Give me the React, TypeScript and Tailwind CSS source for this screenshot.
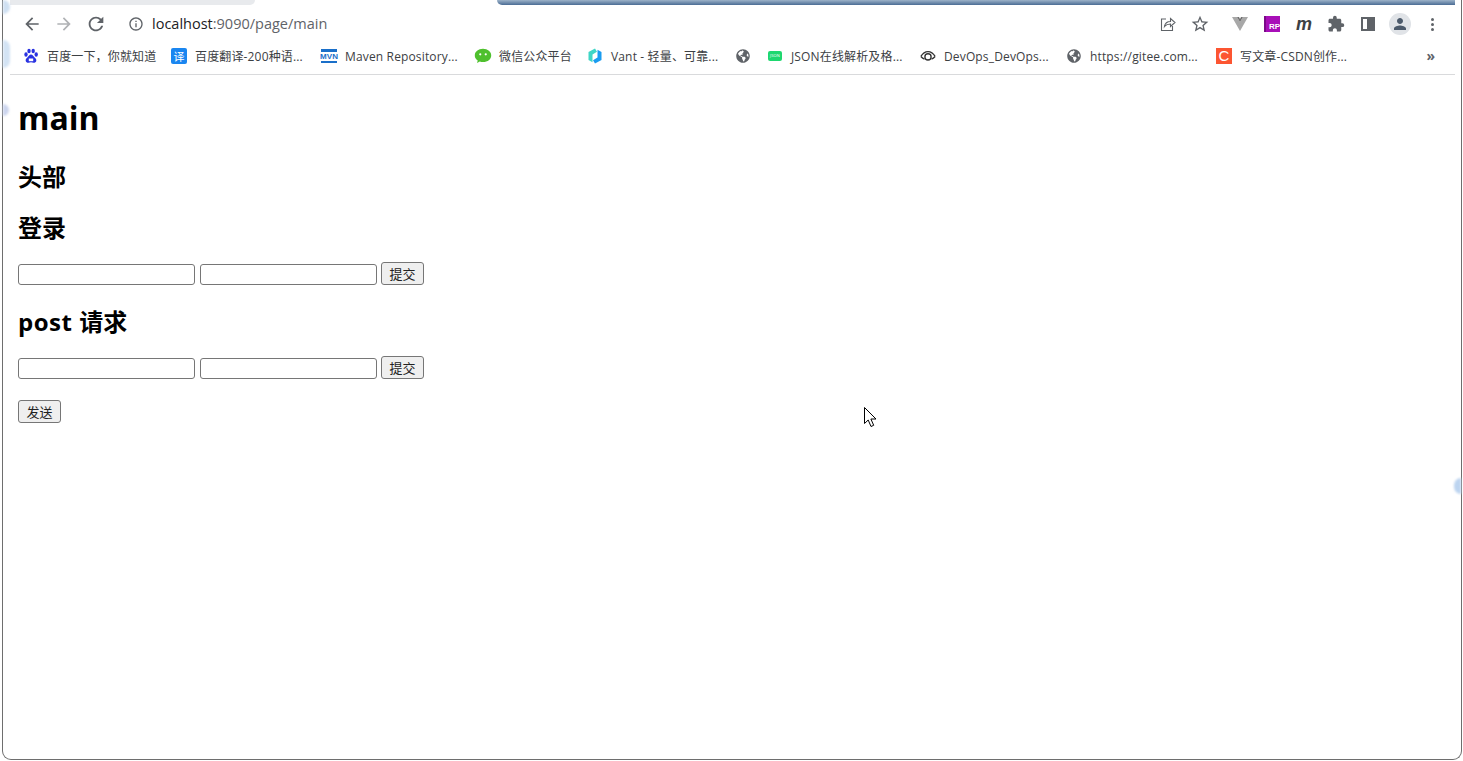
import { MdArrowBack, MdArrowForward, MdRefresh, MdInfoOutline, MdStarBorder, MdExtension, MdPerson } from "react-icons/md";
import { FaGlobeAmericas } from "react-icons/fa";

const UI = "font-['Open_Sans','Noto_Sans_CJK_SC',sans-serif]";

function Cell({ children }: { children: React.ReactNode }) {
  return <div className="w-8 h-8 flex items-center justify-center text-[#5f6368]">{children}</div>;
}

function BaiduIcon() {
  return (
    <svg width="16" height="16" viewBox="0 0 16 16" fill="#2932e1">
      <ellipse cx="3" cy="6.500" rx="1.700" ry="2.200" />
      <ellipse cx="6" cy="3" rx="1.700" ry="2.300" />
      <ellipse cx="10.200" cy="3" rx="1.700" ry="2.300" />
      <ellipse cx="13.200" cy="6.500" rx="1.700" ry="2.200" />
      <path d="M8 6.600c-1.600 0-2.300 1.500-3.400 2.600-1 1-2.300 1.900-1.900 3.700.3 1.300 1.500 1.900 2.800 1.800 1-.1 1.600-.4 2.500-.4s1.500.3 2.500.4c1.300.1 2.500-.5 2.800-1.800.4-1.800-.9-2.700-1.900-3.700C10.300 8.100 9.600 6.600 8 6.600z" />
      <path d="M5.800 10.500h4.400v2.700H5.800z" fill="#fff" />
    </svg>
  );
}

function MvnIcon() {
  return (
    <div className="w-4 h-4 flex flex-col justify-center items-center">
      <div className="w-4 h-[3px] bg-[#1a6fc9]" />
      <span className="text-[8px] leading-[9px] font-bold text-[#1a6fc9] font-['Liberation_Sans',sans-serif]">MVN</span>
      <div className="w-4 h-[2px] bg-[#1a6fc9]" />
    </div>
  );
}

function WechatIcon() {
  return (
    <svg width="16" height="16" viewBox="0 0 16 16" className="scale-110">
      <path d="M8 1.500c-4.300 0-7.500 2.700-7.500 6 0 1.900 1 3.500 2.700 4.600l-.6 2.200 2.500-1.300c.9.300 1.900.5 2.900.5 4.300 0 7.500-2.700 7.500-6s-3.200-6-7.500-6z" fill="#4fc02e" />
      <circle cx="5.500" cy="6.500" r="1" fill="#fff" />
      <circle cx="10.500" cy="6.500" r="1" fill="#fff" />
    </svg>
  );
}

function VantIcon() {
  return (
    <svg width="16" height="16" viewBox="0 0 16 16">
      <path d="M8 0.500 1.500 4v8l4 2.200V6.500l4.500-2.800z" fill="#3fd6c6" />
      <path d="M8 15.500l6.500-3.500V4l-4-2.200v7.700L6 12.300z" fill="#1a9cf0" />
    </svg>
  );
}

function DevopsIcon() {
  return (
    <svg width="16" height="16" viewBox="0 0 18 16" fill="none" stroke="#333" strokeWidth="1.500" className="shrink-0">
      <path d="M1 8.500C3 5 5.500 3 9 3s6 2 8 5.500" />
      <path d="M1 8.500c1.300 1.500 2.500 2.500 4 3M17 8.500c-1.300 1.500-2.500 2.500-4 3" />
      <circle cx="9" cy="9" r="3.500" />
    </svg>
  );
}

function Bookmark({ width, icon, label }: { width: string; icon: React.ReactNode; label?: string }) {
  return (
    <div className={`${width} shrink-0 flex items-center gap-2 text-[12px] tracking-[0.15px] text-[#3c4043]`}>
      <div className="w-4 h-4 flex items-center justify-center shrink-0">{icon}</div>
      {label && <span className="whitespace-nowrap mt-px">{label}</span>}
    </div>
  );
}

function Globe() {
  return <FaGlobeAmericas size={14} className="text-[#5f6368]" />;
}

function Pair() {
  return (
    <div className="flex items-end gap-1">
      <input className="w-[177px] h-[21px] bg-white border border-[#767676] rounded-[3px] mr-px" />
      <input className="w-[177px] h-[21px] bg-white border border-[#767676] rounded-[3px]" />
      <FormBtn label="提交" />
    </div>
  );
}

function FormBtn({ label }: { label: string }) {
  return (
    <button className="w-[43px] h-[23px] bg-[#efefef] border border-[#767676] rounded-[3px] text-[13px] leading-none text-[#222] font-['Noto_Sans_CJK_SC',sans-serif]">
      {label}
    </button>
  );
}

export default function App() {
  return (
    <div className={`relative w-[1463px] h-[761px] overflow-hidden bg-white ${UI}`}>
      <div className="ml-[2px] w-[1460px] h-[760px] border-x border-b border-[#6e6e6e] rounded-b-[9px] flex flex-col pl-[7px] pr-[6px]">
        {/* tab strip, mostly cut off by the capture */}
        <div className="flex h-[5px] shrink-0">
          <div className="w-[245px] bg-[#e8eaed] rounded-br-[6px]" />
          <div className="w-[242px]" />
          <div className="flex-1 rounded-bl-[5px] bg-linear-to-b from-[#9db3c9] to-[#4b6c94]" />
        </div>

        <div className="h-[38px] flex items-center shrink-0 pl-[6px] pr-[7px]">
          <Cell><MdArrowBack size={20} /></Cell>
          <Cell><span className="text-[#b0b2b5]"><MdArrowForward size={20} /></span></Cell>
          <Cell><MdRefresh size={22} /></Cell>
          <div className="w-2" />
          <Cell><MdInfoOutline size={16} /></Cell>
          <div className="text-[14.5px] whitespace-nowrap">
            <span className="text-[#202124]">localhost</span>
            <span className="text-[#5f6368]">:9090/page/main</span>
          </div>
          <div className="flex-1" />
          <Cell>
            <svg width="16" height="16" viewBox="0 0 16 16" fill="none" stroke="#5f6368" strokeWidth="1.100">
              <path d="M6 3H1.500v11.500h11V10" />
              <path d="M4.500 10.500c.5-3 2.500-5 6-5V2.500l4.500 4-4.500 4V8c-2.500 0-4.500.7-6 2.500z" />
            </svg>
          </Cell>
          <Cell><MdStarBorder size={20} /></Cell>
          <div className="w-2" />
          <Cell>
            <svg width="18" height="16" viewBox="0 0 18 16">
              <path d="M1 1h5l3 5 3-5h5L9 15z" fill="#a8a8a8" />
              <path d="M6 1l3 5 3-5h-2L9 3 8 1z" fill="#6f6f6f" />
            </svg>
          </Cell>
          <Cell>
            <div className="w-4 h-4 bg-[#a80fb8] border-l-2 border-[#7a0a88] flex items-end justify-end">
              <span className="text-[8px] leading-[10px] font-bold text-white font-['Liberation_Sans',sans-serif]">RP</span>
            </div>
          </Cell>
          <Cell><span className="text-[18px] leading-none font-bold italic text-[#3c4043] font-['Liberation_Sans',sans-serif]">m</span></Cell>
          <Cell><MdExtension size={18} /></Cell>
          <Cell>
            <div className="w-[14px] h-[14px] border-2 border-[#5f6368] flex justify-end">
              <div className="w-[6px] bg-[#5f6368]" />
            </div>
          </Cell>
          <Cell>
            <div className="w-[22px] h-[22px] rounded-full bg-[#e0e3e7] flex items-center justify-center">
              <MdPerson size={18} className="text-[#4c5a6b]" />
            </div>
          </Cell>
          <Cell>
            <div className="flex flex-col gap-[2px]">
              <div className="w-[3px] h-[3px] rounded-full bg-[#5f6368]" />
              <div className="w-[3px] h-[3px] rounded-full bg-[#5f6368]" />
              <div className="w-[3px] h-[3px] rounded-full bg-[#5f6368]" />
            </div>
          </Cell>
        </div>

        <div className="h-[32px] shrink-0 pb-[5px] border-b border-[#d9dadc] flex items-center pl-[13px] pr-[20px]">
          <Bookmark width="w-[148px]" icon={<BaiduIcon />} label="百度一下，你就知道" />
          <Bookmark width="w-[150px]" icon={<div className="w-4 h-4 rounded-[2px] bg-[#1a86f0] text-white text-[11px] leading-4 text-center font-['Noto_Sans_CJK_SC',sans-serif]">译</div>} label="百度翻译-200种语..." />
          <Bookmark width="w-[154px]" icon={<MvnIcon />} label="Maven Repository..." />
          <Bookmark width="w-[112px]" icon={<WechatIcon />} label="微信公众平台" />
          <Bookmark width="w-[148px]" icon={<VantIcon />} label="Vant - 轻量、可靠..." />
          <Bookmark width="w-[32px]" icon={<Globe />} />
          <Bookmark width="w-[153px]" icon={<div className="w-[14px] h-[10px] rounded-[2px] bg-[#1ed76f] text-white text-[4px] leading-[10px] text-center">JSON</div>} label="JSON在线解析及格..." />
          <Bookmark width="w-[146px]" icon={<DevopsIcon />} label="DevOps_DevOps..." />
          <Bookmark width="w-[150px]" icon={<Globe />} label="https://gitee.com..." />
          <Bookmark width="w-[190px]" icon={<div className="w-4 h-4 bg-[#fc5531] text-white text-[15px] leading-4 text-center font-['Liberation_Sans',sans-serif]">C</div>} label="写文章-CSDN创作..." />
          <div className="flex-1" />
          <span className="text-[14px] font-bold leading-none text-[#5f6368]">»</span>
        </div>

        <main className="pt-[21px] pl-2 flex flex-col items-start text-black">
          <h1 className="text-[32px] leading-[43px] font-bold">main</h1>
          <h2 className="mt-[22px] text-[24px] leading-8 font-bold">头部</h2>
          <h2 className="mt-[19px] text-[24px] leading-8 font-bold">登录</h2>
          <div className="mt-[18px]"><Pair /></div>
          <h2 className="mt-[21px] text-[24px] leading-8 font-bold"><span className="tracking-[0.5px]">post </span>请求</h2>
          <div className="mt-[18px]"><Pair /></div>
          <div className="mt-[21px] flex"><FormBtn label="发送" /></div>
        </main>
      </div>

      {/* smears of the desktop behind the window edge */}
      <div className="absolute left-[3px] top-0 w-[7px] h-[14px] bg-[#cfe0f2] rounded-r-full blur-[1px]" />
      <div className="absolute left-[3px] top-[40px] w-[7px] h-[28px] bg-[#d3e3f4] rounded-r-full blur-[1px]" />
      <div className="absolute left-[3px] top-[104px] w-[6px] h-[12px] bg-[#ccd5ee] rounded-r-full blur-[1px]" />
      <div className="absolute left-[1454px] top-[478px] w-[7px] h-[16px] bg-[#bcd4f0] rounded-l-full blur-[1px]" />

      <svg className="absolute left-[863px] top-[406px]" width="15" height="23" viewBox="0 0 15 23">
        <path d="M1.500 1.500v16l3.700-3.500 2.800 6.500 2.700-1.200-2.800-6.300h5.100z" fill="#fff" stroke="#000" strokeWidth="1" />
      </svg>
    </div>
  );
}
